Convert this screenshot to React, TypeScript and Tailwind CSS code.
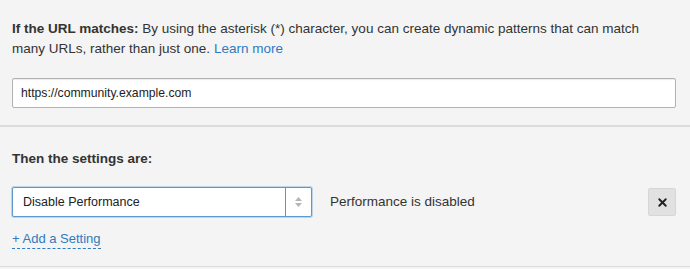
import { X } from 'lucide-react'

export default function App() {
  return (
    <div className="w-[690px] h-[269px] bg-[#f4f4f4] text-[13.5px] leading-[20px] text-[#333] overflow-hidden" style={{ fontFamily: '"Liberation Sans", Arial, sans-serif' }}>
      <div className="px-3 pt-[19px] h-[127px] border-b-2 border-[#dcdcdc]">
        <p className="max-w-[640px]">
          <span className="font-bold">If the URL matches:</span> By using the asterisk (*) character, you can create dynamic patterns that can match many URLs, rather than just one.{' '}
          <a className="text-[#2f7bbf]">Learn more</a>
        </p>
        <div className="mt-[19px] mr-[2px] h-[30px] bg-white border border-[#b3b3b3] rounded-[2px] shadow-[inset_0_1px_1px_rgba(0,0,0,0.08)] flex items-center px-2 text-[12.2px] text-[#222]">
          https://community.example.com
        </div>
      </div>
      <div className="px-3 pt-[22px] h-[140px] border-b border-[#dcdcdc]">
        <p className="font-bold">Then the settings are:</p>
        <div className="mt-[18px] flex items-center">
          <div className="w-[300px] h-[30px] bg-white border border-[#5d99cf] rounded-[2px] shadow-[0_0_0_1px_rgba(93,153,207,0.35)] flex">
            <span className="flex-1 flex items-center px-[10px] text-[12.5px] text-[#222]">Disable Performance</span>
            <span className="w-[26px] border-l border-[#8a8a8a] flex flex-col items-center justify-center gap-[2px]">
              <svg width="7" height="4" viewBox="0 0 7 4"><path d="M0 4 L3.5 0 L7 4 Z" fill="#b5b5b5" /></svg>
              <svg width="7" height="4" viewBox="0 0 7 4"><path d="M0 0 L3.5 4 L7 0 Z" fill="#b5b5b5" /></svg>
            </span>
          </div>
          <span className="ml-[18px] text-[#333]">Performance is disabled</span>
          <button className="ml-auto mr-[2px] w-[28px] h-[28px] bg-[#e1e1e1] border border-[#d6d6d6] rounded-[2px] flex items-center justify-center">
            <X size={13} strokeWidth={3.5} color="#222" />
          </button>
        </div>
        <a className="inline-block mt-[12px] text-[13px] text-[#2f7bbf] border-b border-dashed border-[#2f7bbf] leading-[19px]">+ Add a Setting</a>
      </div>
    </div>
  )
}
